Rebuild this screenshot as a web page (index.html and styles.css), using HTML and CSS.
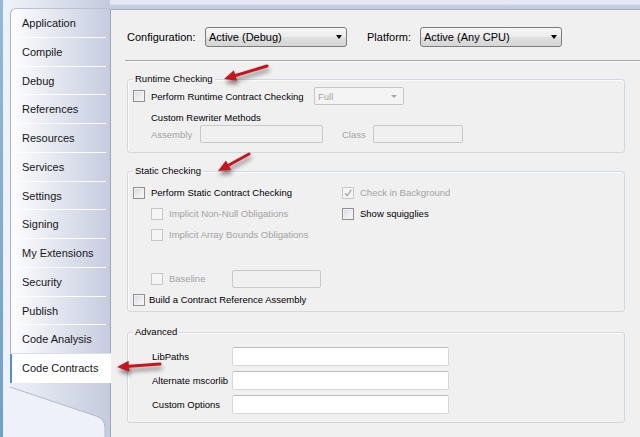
FILE: index.html
```html
<!DOCTYPE html>
<html>
<head>
<meta charset="utf-8">
<title>Code Contracts</title>
<link rel="stylesheet" href="styles.css">
</head>
<body>
<div class="edge"></div>
<div class="gutter"></div>
<nav class="sidebar">
  <ul class="tabs">
    <li>Application</li>
    <li>Compile</li>
    <li>Debug</li>
    <li>References</li>
    <li>Resources</li>
    <li>Services</li>
    <li>Settings</li>
    <li>Signing</li>
    <li>My Extensions</li>
    <li>Security</li>
    <li>Publish</li>
    <li>Code Analysis</li>
    <li class="selected">Code Contracts</li>
  </ul>
  <svg class="tail" width="100" height="56" viewBox="0 0 100 56">
    <path d="M0,4 L86,33 Q95,36 95,45 L95,56 L0,56 Z" fill="#eef1f7"/>
    <path d="M0,4 L86,33 Q95,36 95,45 L95,56" fill="none" stroke="#b1bacb" stroke-width="1"/>
  </svg>
</nav>
<div class="main">
  <div class="topband"></div>
  <section class="panel">
    <div class="config">
      <span class="cfg-label">Configuration:</span>
      <span class="combo"><span>Active (Debug)</span><span class="caret"></span></span>
      <span class="plat-label">Platform:</span>
      <span class="combo"><span>Active (Any CPU)</span><span class="caret"></span></span>
    </div>
    <hr class="sep">

    <fieldset class="group runtime">
      <legend>Runtime Checking</legend>
      <div class="row rt-first">
        <label class="chk rt-perform"><span class="cb"></span>Perform Runtime Contract Checking</label>
        <span class="combo combo-dis full-combo"><span>Full</span><span class="caret caret-dis"></span></span>
      </div>
      <div class="row rt-custom">Custom Rewriter Methods</div>
      <div class="row rt-asm">
        <span class="dis-text asm-label">Assembly</span><span class="tb tb-dis asm-box"></span>
        <span class="dis-text class-label">Class</span><span class="tb tb-dis class-box"></span>
      </div>
    </fieldset>

    <fieldset class="group static">
      <legend>Static Checking</legend>
      <div class="row st-row st-first">
        <label class="chk col1"><span class="cb"></span>Perform Static Contract Checking</label>
        <label class="chk dis-text"><span class="cb cb-dis"><svg width="10" height="10" viewBox="0 0 10 10"><path d="M2 5.2 L4.2 7.6 L8.2 1.8" fill="none" stroke="#a9a9a9" stroke-width="1.4"/></svg></span>Check in Background</label>
      </div>
      <div class="row st-row">
        <label class="chk col1 indent dis-text"><span class="cb cb-dis"></span>Implicit Non-Null Obligations</label>
        <label class="chk"><span class="cb"></span>Show squigglies</label>
      </div>
      <div class="row st-row">
        <label class="chk col1 indent dis-text"><span class="cb cb-dis"></span>Implicit Array Bounds Obligations</label>
      </div>
      <div class="st-spacer"></div>
      <div class="row st-row">
        <label class="chk indent dis-text baseline"><span class="cb cb-dis"></span>Baseline</label>
        <span class="tb tb-dis baseline-box"></span>
      </div>
      <div class="row st-row">
        <label class="chk chk-tight"><span class="cb"></span>Build a Contract Reference Assembly</label>
      </div>
    </fieldset>

    <fieldset class="group advanced">
      <legend>Advanced</legend>
      <div class="row adv-row adv-first"><span class="adv-label">LibPaths</span><span class="tb adv-box"></span></div>
      <div class="row adv-row"><span class="adv-label">Alternate mscorlib</span><span class="tb adv-box"></span></div>
      <div class="row adv-row"><span class="adv-label">Custom Options</span><span class="tb adv-box"></span></div>
    </fieldset>
  </section>
</div>

<svg class="arrows" width="640" height="437" viewBox="0 0 640 437">
  <g class="arrow">
    <line x1="267" y1="66" x2="235.5" y2="75.5"/>
    <polygon points="224,79 237.1,80.8 233.9,70.2"/>
  </g>
  <g class="arrow">
    <line x1="249" y1="154" x2="228.5" y2="165.2"/>
    <polygon points="218,171 231.2,170 225.9,160.4"/>
  </g>
  <g class="arrow">
    <line x1="160" y1="364" x2="129" y2="366.2"/>
    <polygon points="117,367 129.4,371.7 128.6,360.7"/>
  </g>
</svg>
</body>
</html>
```

FILE: styles.css
```css
* { box-sizing: border-box; }
html, body { margin: 0; padding: 0; }
body {
  width: 640px;
  height: 437px;
  overflow: hidden;
  display: flex;
  position: relative;
  font-family: "Liberation Sans", Arial, sans-serif;
  color: #000;
  background: #eef1f7;
}
.edge { width: 3px; flex: none; background: linear-gradient(#93b9dc, #6f9fcc); }
.gutter { width: 7px; flex: none; background: #eef1f7; }

.sidebar {
  width: 100px;
  flex: none;
  display: flex;
  flex-direction: column;
  background: linear-gradient(to right, #eef1f7, #c4cbde);
}
.tabs {
  list-style: none;
  margin: 8px 0 0;
  padding: 0;
  border-left: 1px solid #aab4c7;
  border-top: 1px solid #b9c2d4;
  border-top-left-radius: 6px;
  background: linear-gradient(to right, #fdfdfe, #c5ccdf);
}
.tabs li {
  height: 28.75px;
  line-height: 29px;
  padding-left: 11px;
  font-size: 11px;
  color: #161616;
  white-space: nowrap;
  background: linear-gradient(#fbfcfe, #fbfcfe) no-repeat 2px 100% / 93px 1px;
}
.tabs li.selected {
  background: #fff;
  margin-left: -1px;
  margin-right: -1px;
  border-left: 2px solid #4a90da;
  padding-left: 10px;
  position: relative;
  z-index: 1;
  box-shadow: 0 -1px 0 #d9dee8;
}
.tail { display: block; flex: none; }

.main { flex: 1; display: flex; flex-direction: column; min-width: 0; }
.topband {
  height: 10px;
  flex: none;
  background: linear-gradient(#e4e8f0 0, #e4e8f0 4px, #cbd2e5 5px, #bfc7dc 9px, #a6afc5 9px);
}
.panel {
  flex: 1;
  background: #f0f0f0;
  border-left: 1px solid #9ea7b9;
  padding-top: 17px;
  font-size: 9.5px;
}

.config {
  display: flex;
  align-items: center;
  height: 20px;
  margin-left: 16px;
  font-size: 11px;
}
.cfg-label { width: 78px; }
.plat-label { width: 53px; margin-left: 20px; }
.combo {
  width: 142px;
  height: 20px;
  border: 1px solid #7c7c7c;
  border-radius: 3px;
  background: linear-gradient(#f6f6f6, #ececec 50%, #e0e0e0 50%, #d5d5d5);
  display: flex;
  align-items: center;
  justify-content: space-between;
  padding: 0 4px 0 3px;
  font-size: 11px;
}
.caret {
  width: 0;
  height: 0;
  border-left: 3.5px solid transparent;
  border-right: 3.5px solid transparent;
  border-top: 4px solid #000;
}
.combo-dis {
  border-color: #c5c5c5;
  background: #f4f4f4;
  color: #a6a6a6;
  font-size: 9.5px;
  height: 18px;
  border-radius: 2px;
}
.caret-dis {
  border-left-width: 3px;
  border-right-width: 3px;
  border-top: 3px solid #a5a5a5;
}
.full-combo { width: 90px; padding-right: 6px; }

.sep {
  margin: 13px 0 0 14px;
  border: 0;
  border-top: 1px solid #a3a3a3;
  border-bottom: 1px solid #fff;
  height: 0;
}

.group {
  margin: 11px 0 0 16px;
  width: 498px;
  min-width: 0;
  border: 1px solid #d3d9df;
  border-radius: 3px;
  padding: 0 0 9px 5px;
  box-shadow: inset 1px 1px 0 #fbfbfb;
}
.group legend {
  padding: 0 2px;
  font-size: 9.5px;
  line-height: 12px;
  color: #000;
}
.static { margin-top: 12px; padding-bottom: 1px; }
.advanced { margin-top: 14px; padding-bottom: 8px; }

.row { display: flex; align-items: center; }
.chk { display: flex; align-items: center; white-space: nowrap; }
.cb {
  width: 12px;
  height: 12px;
  flex: none;
  margin-right: 6px;
  border: 1px solid #8f8f8f;
  background: linear-gradient(135deg, #d6d9de, #fbfbfb);
  box-shadow: inset 0 0 0 1px #f3f3f3;
  display: flex;
  align-items: center;
  justify-content: center;
}
.cb-dis {
  border-color: #c7c7c7;
  background: #f5f5f5;
  box-shadow: none;
}
.chk-tight .cb { margin-right: 4px; }
.dis-text { color: #a3a3a3; }
.tb {
  height: 18px;
  border: 1px solid #d8d8d8;
  border-top-color: #b9b9b9;
  border-radius: 2px;
  background: #fff;
}
.tb-dis {
  background: #f0f0f0;
  border-color: #c9c9c9;
}

.rt-first { margin-top: 2px; height: 18px; }
.rt-perform { width: 181px; }
.rt-custom { margin-top: 6px; height: 12px; padding-left: 18px; }
.rt-asm { margin-top: 2px; height: 18px; padding-left: 18px; }
.asm-label { width: 49px; }
.asm-box { width: 123px; }
.class-label { width: 31px; margin-left: 19px; }
.class-box { width: 90px; }

.st-first { margin-top: 5px; }
.st-row { height: 21px; }
.col1 { width: 209px; }
.indent { margin-left: 18px; }
.indent.col1 { width: 191px; }
.st-spacer { height: 23px; }
.baseline { width: 81px; }
.baseline-box { width: 89px; }

.adv-first { margin-top: 9px; }
.adv-row { height: 19px; margin-bottom: 5px; padding-left: 19px; }
.adv-row:last-child { margin-bottom: 0; }
.adv-label { width: 80px; white-space: nowrap; }
.adv-box { width: 217px; height: 19px; }

.arrows {
  position: absolute;
  top: 0;
  left: 0;
  pointer-events: none;
}
.arrow {
  filter: drop-shadow(1px 4px 2px rgba(0, 0, 0, 0.45));
}
.arrow line { stroke: #c8151c; stroke-width: 3; stroke-linecap: round; }
.arrow polygon { fill: #c8151c; }
```
